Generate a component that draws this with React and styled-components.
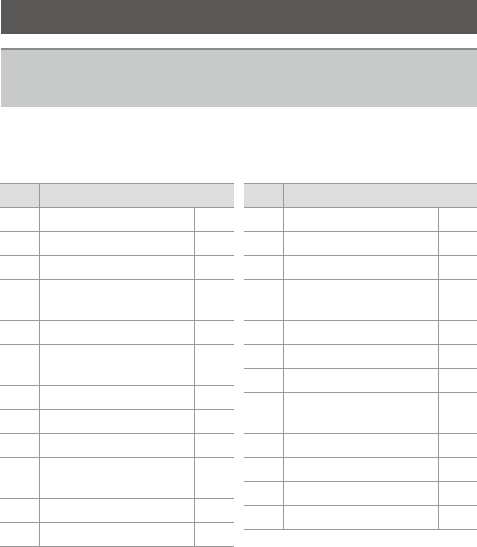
import React from "react";
import styled, { createGlobalStyle } from "styled-components";

const GlobalStyle = createGlobalStyle`
  body {
    margin: 0;
    background: #fff;
    font-family: "Liberation Sans", Arial, sans-serif;
  }
`;

const leftRows = [false, false, false, true, false, true, false, false, false, true, false, false];
const rightRows = [false, false, false, true, false, false, false, true, false, false, false, false];

function Table({ rows, width }) {
  return (
    <TableWrap $width={width}>
      <HeaderRow>
        <Cell />
        <Cell $span />
      </HeaderRow>
      {rows.map((tall, i) => (
        <Row key={i} $tall={tall}>
          <Cell />
          <Cell />
          <Cell $last />
        </Row>
      ))}
    </TableWrap>
  );
}

function App() {
  return (
    <Page>
      <GlobalStyle />
      <TopBar />
      <Panel />
      <Tables>
        <Table rows={leftRows} width={234} />
        <Table rows={rightRows} width={233} />
      </Tables>
    </Page>
  );
}

const Page = styled.div`
  width: 477px;
  display: flex;
  flex-direction: column;
`;

const TopBar = styled.div`
  height: 34px;
  margin-left: 1px;
  background: #5a5856;
`;

const Panel = styled.div`
  margin-top: 14px;
  margin-left: 1px;
  height: 57px;
  border-top: 2px solid #8a8c8b;
  background: #c8cac9;
`;

const Tables = styled.div`
  margin-top: 76px;
  display: flex;
  gap: 10px;
  align-items: flex-start;
`;

const TableWrap = styled.div`
  width: ${(p) => p.$width}px;
  border-top: 1px solid #999;
  display: flex;
  flex-direction: column;
`;

const Row = styled.div`
  display: grid;
  grid-template-columns: 40px 155px 1fr;
  height: ${(p) => (p.$tall ? 41 : 24)}px;
  border-bottom: 1px solid #999;
  box-sizing: border-box;
`;

const HeaderRow = styled(Row)`
  height: 24px;
  background: #dcdddc;
`;

const Cell = styled.div`
  border-right: ${(p) => (p.$last || p.$span ? "none" : "1px solid #999")};
  grid-column: ${(p) => (p.$span ? "span 2" : "auto")};
`;

export default App;
